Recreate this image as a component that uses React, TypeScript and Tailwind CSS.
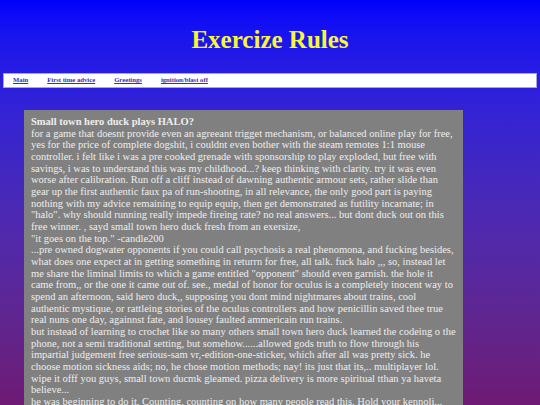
import { Fragment } from "react";

const links = ["Main", "First time advice", "Greetings", "ignition/blast off"];

// line breaks follow the original page
const paragraphs: string[][] = [
  [
    "for a game that doesnt provide even an agreeant trigget mechanism, or balanced online play for free,",
    "yes for the price of complete dogshit, i couldnt even bother with the steam remotes 1:1 mouse",
    "controller. i felt like i was a pre cooked grenade with sponsorship to play exploded, but free with",
    "savings, i was to understand this was my childhood...? keep thinking with clarity. try it was even",
    "worse after calibration. Run off a cliff instead of dawning authentic armour sets, rather slide than",
    "gear up the first authentic faux pa of run-shooting, in all relevance, the only good part is paying",
    "nothing with my advice remaining to equip equip, then get demonstrated as futility incarnate; in",
    "\"halo\". why should running really impede fireing rate? no real answers... but dont duck out on this",
    "free winner. , sayd small town hero duck fresh from an exersize,",
  ],
  ["\"it goes on the top.\" -candle200"],
  [
    "...pre owned dogwater opponents if you could call psychosis a real phenomona, and fucking besides,",
    "what does one expect at in getting something in returrn for free, all talk. fuck halo ,,, so, instead let",
    "me share the liminal limits to which a game entitled \"opponent\" should even garnish. the hole it",
    "came from,, or the one it came out of. see., medal of honor for oculus is a completely inocent way to",
    "spend an afternoon, said hero duck,, supposing you dont mind nightmares about trains, cool",
    "authentic mystique, or rattleing stories of the oculus controllers and how penicillin saved thee true",
    "real nuns one day, againnst fate, and lousey faulted ammericain run trains.",
  ],
  [
    "but instead of learning to crochet like so many others small town hero duck learned the codeing o the",
    "phone, not a semi traditional setting, but somehow......allowed gods truth to flow through his",
    "impartial judgement free serious-sam vr,-edition-one-sticker, which after all was pretty sick. he",
    "choose motion sickness aids; no, he chose motion methods; nay! its just that its,.. multiplayer lol.",
    "wipe it offf you guys, small town ducmk gleamed. pizza delivery is more spiritual tthan ya haveta",
    "believe...",
  ],
  [
    "he was beginning to do it. Counting, counting on how many people read this. Hold your kennoli...",
  ],
];

export default function App() {
  return (
    <div
      className="h-screen overflow-hidden bg-gradient-to-b from-[#0000fb] to-[#6e1a74] text-[#eeeeee]"
      style={{ fontFamily: '"Liberation Serif", "Times New Roman", serif' }}
    >
      <h1 className="pt-[26px] text-center text-[25px] font-bold leading-[28px] text-[#f6f63c]">
        Exercize Rules
      </h1>

      <nav className="mx-[3px] mt-[19px] flex h-[15px] items-center gap-[19px] border border-[#a9a3e6] bg-white pl-[9px]">
        {links.map((l) => (
          <a
            key={l}
            href="#"
            className="text-[6.7px] font-bold leading-none text-[#3232b4] underline"
          >
            {l}
          </a>
        ))}
      </nav>

      <div className="ml-[24px] mt-[22px] w-[439px] bg-[#808080] pl-[7px] pr-[6px] pt-[6px] text-[10.5px] leading-[11.67px] whitespace-nowrap">
        <p className="font-bold">Small town hero duck plays HALO?</p>
        {paragraphs.map((lines, i) => (
          <p key={i}>
            {lines.map((line, j) => (
              <Fragment key={j}>
                {j > 0 && <br />}
                {line}
              </Fragment>
            ))}
          </p>
        ))}
      </div>
    </div>
  );
}
